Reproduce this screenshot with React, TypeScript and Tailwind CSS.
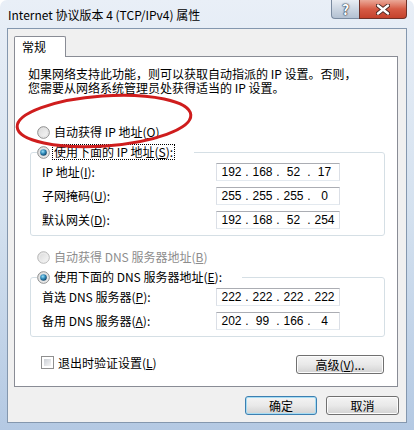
import React from "react"

const ui = "font-['Noto_Sans_CJK_SC','DejaVu_Sans',sans-serif]"

function Radio({ checked, disabled }: { checked?: boolean; disabled?: boolean }) {
  return (
    <svg width="13" height="13" viewBox="0 0 13 13" className="shrink-0">
      <defs>
        <linearGradient id="rg-bg" x1="0" y1="0" x2="1" y2="1">
          <stop offset="0" stopColor="#d6d6d6" />
          <stop offset="1" stopColor="#fbfbfb" />
        </linearGradient>
        <radialGradient id="rg-dot" cx="0.4" cy="0.35" r="0.7">
          <stop offset="0" stopColor="#9ee0f7" />
          <stop offset="0.5" stopColor="#2f8ab9" />
          <stop offset="1" stopColor="#10395a" />
        </radialGradient>
      </defs>
      <circle cx="6.5" cy="6.5" r="5.8" fill="url(#rg-bg)" stroke={disabled ? "#b8b8b8" : "#8a8a8a"} strokeWidth="1" />
      <circle cx="6.5" cy="6.5" r="4.3" fill="none" stroke={disabled ? "#eeeeee" : "#e4e4e4"} strokeWidth="1" />
      {checked && <circle cx="6.5" cy="6.5" r="3.3" fill="url(#rg-dot)" />}
    </svg>
  )
}

function Checkbox() {
  return (
    <div className="w-[13px] h-[13px] border border-[#8f8f8f] bg-white p-[2px] shrink-0">
      <div className="w-full h-full bg-gradient-to-br from-[#cbcfd5] to-[#f6f6f6]" />
    </div>
  )
}

function IpBox({ parts }: { parts: string[] }) {
  return (
    <div className="w-[124px] h-[18px] bg-white border border-[#abadb3] border-l-[#dbdfe6] border-r-[#dbdfe6] border-b-[#e3e9ef] flex items-center pl-[2px] font-['Liberation_Sans',sans-serif] text-[12px] text-black">
      {parts.map((p, i) => (
        <React.Fragment key={i}>
          {i > 0 && <span className="w-[6px] text-center">.</span>}
          <span className="w-[25px] text-center">{p}</span>
        </React.Fragment>
      ))}
    </div>
  )
}

function Mn({ k }: { k: string }) {
  return (
    <>
      (<span className="underline underline-offset-1">{k}</span>)
    </>
  )
}

function Row({ label, parts }: { label: React.ReactNode; parts: string[] }) {
  return (
    <div className="h-[20px] flex items-center">
      <span className="w-[174px] text-[12px]">{label}</span>
      <IpBox parts={parts} />
    </div>
  )
}

function Btn({ children, primary, className }: { children: React.ReactNode; primary?: boolean; className?: string }) {
  return (
    <button
      className={
        "h-[19px] rounded-[3px] border text-[12px] leading-none text-black bg-gradient-to-b from-[#f4f4f4] via-[#e9e9e9] to-[#d2d2d2] " +
        (primary ? "border-[#3c7fb1] shadow-[inset_0_0_0_1px_#a6dcf3]" : "border-[#707070] shadow-[inset_0_0_0_1px_#fcfcfc]") +
        " " +
        (className ?? "")
      }
    >
      {children}
    </button>
  )
}

export default function App() {
  return (
    <div className={"relative w-[414px] h-[430px] overflow-hidden rounded-t-[7px] bg-gradient-to-b from-[#e9eff7] via-[#d4e1ef] to-[#b4c9e3] flex flex-col text-black " + ui}>
      {/* title bar */}
      <div className="h-[28px] flex items-start justify-between pl-[8px] shrink-0">
        <span className="mt-[6px] text-[12px] leading-[18px]">Internet 协议版本 4 (TCP/IPv4) 属性</span>
        <div className="flex mr-[7px]">
          <div className="w-[28px] h-[19px] rounded-bl-[4px] border border-t-0 border-r-0 border-[#7a8ba0] bg-gradient-to-b from-[#e9eef4] via-[#ccd6e2] to-[#b3c1d2] flex items-center justify-center">
            <span className="text-[14px] font-bold leading-none text-white [text-shadow:0_0_1px_#2b3644,0_0_1px_#2b3644,0_0_2px_#2b3644]">?</span>
          </div>
          <div className="w-[48px] h-[19px] rounded-br-[4px] border border-t-0 border-[#6e3128] bg-gradient-to-b from-[#eaa898] via-[#d65b45] to-[#c4422c] flex items-center justify-center">
            <svg width="14" height="11" viewBox="0 0 14 11">
              <path d="M2 1.5 L12 9.5 M12 1.5 L2 9.5" stroke="#4a2620" strokeWidth="4.2" strokeLinecap="round" />
              <path d="M2 1.5 L12 9.5 M12 1.5 L2 9.5" stroke="#ffffff" strokeWidth="2.4" strokeLinecap="round" />
            </svg>
          </div>
        </div>
      </div>

      {/* client area */}
      <div className="mx-[7px] h-[395px] bg-[#f0f0f0] border border-[#8497ae] pt-[7px] pl-[6px] shrink-0">
        <div className="relative z-10 -mb-px w-[52px] h-[21px] bg-white border border-b-0 border-[#898c95] rounded-t-[2px] pl-[7px] text-[12px] leading-[20px]">
          常规
        </div>

        <div className="w-[384px] h-[331px] bg-white border border-[#898c95] text-[12px]">
          <p className="pt-[10px] pl-[13px] leading-[14px]">
            如果网络支持此功能，则可以获取自动指派的 IP 设置。否则，
            <br />
            您需要从网络系统管理员处获得适当的 IP 设置。
          </p>

          <div className="mt-[27px] h-[20px] flex items-center gap-[4px] pl-[22px]">
            <Radio />
            <span>
              自动获得 IP 地址<Mn k="O" />
            </span>
          </div>

          <fieldset className="ml-[15px] w-[355px] border border-[#d5dfe5] rounded-[3px] pl-[6px] pb-[5px]">
            <legend className="pr-[20px]">
              <div className="h-[20px] flex items-center gap-[3px]">
                <Radio checked />
                <span className="outline-1 outline-dotted outline-black px-[1px] leading-[14px]">
                  使用下面的 IP 地址<Mn k="S" />:
                </span>
              </div>
            </legend>
            <div className="pl-[5px] flex flex-col gap-[4px]">
              <Row label={<>IP 地址<Mn k="I" />:</>} parts={["192", "168", "52", "17"]} />
              <Row label={<>子网掩码<Mn k="U" />:</>} parts={["255", "255", "255", "0"]} />
              <Row label={<>默认网关<Mn k="D" />:</>} parts={["192", "168", "52", "254"]} />
            </div>
          </fieldset>

          <div className="mt-[11px] h-[20px] flex items-center gap-[4px] pl-[22px] text-[#8d8d8d]">
            <Radio disabled />
            <span>
              自动获得 DNS 服务器地址<Mn k="B" />
            </span>
          </div>

          <fieldset className="ml-[15px] w-[355px] border border-[#d5dfe5] rounded-[3px] pl-[6px] pb-[5px]">
            <legend className="pr-[20px]">
              <div className="h-[20px] flex items-center gap-[4px]">
                <Radio checked />
                <span>
                  使用下面的 DNS 服务器地址<Mn k="E" />:
                </span>
              </div>
            </legend>
            <div className="pl-[5px] flex flex-col gap-[4px]">
              <Row label={<>首选 DNS 服务器<Mn k="P" />:</>} parts={["222", "222", "222", "222"]} />
              <Row label={<>备用 DNS 服务器<Mn k="A" />:</>} parts={["202", "99", "166", "4"]} />
            </div>
          </fieldset>

          <div className="mt-[18px] h-[19px] flex items-center justify-between pl-[26px] pr-[13px]">
            <div className="self-start mt-[1px] h-[13px] flex items-center gap-[4px]">
              <Checkbox />
              <span>
                退出时验证设置<Mn k="L" />
              </span>
            </div>
            <Btn className="w-[88px]">
              高级<Mn k="V" />...
            </Btn>
          </div>
        </div>

        <div className="mt-[9px] w-[385px] flex justify-end gap-[9px]">
          <Btn primary className="w-[72px]">
            确定
          </Btn>
          <Btn className="w-[73px]">取消</Btn>
        </div>
      </div>

      {/* red annotation ellipse */}
      <svg className="absolute left-0 top-0 pointer-events-none" width="414" height="430" viewBox="0 0 414 430">
        <ellipse cx="104" cy="121" rx="87" ry="25" transform="rotate(-4 104 121)" fill="none" stroke="#cf1d1d" strokeWidth="3" />
      </svg>
    </div>
  )
}
